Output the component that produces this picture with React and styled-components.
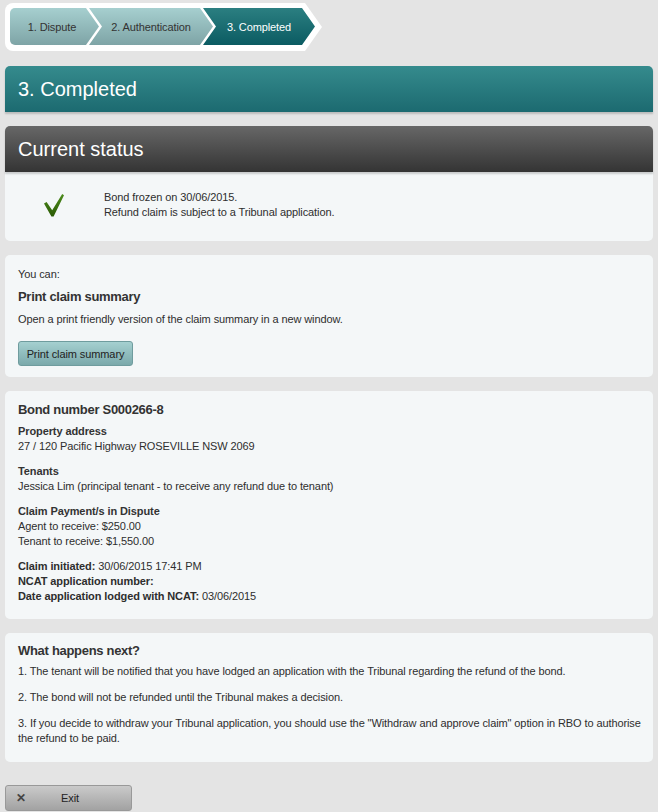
import styled, { createGlobalStyle } from "styled-components";

const GlobalStyle = createGlobalStyle`
  html, body {
    margin: 0;
    padding: 0;
    background: #e4e4e4;
  }
  body {
    font-family: "Liberation Sans", Arial, sans-serif;
    font-size: 11px;
    letter-spacing: -0.1px;
    color: #2e2e2e;
  }
`;

const Page = styled.div`
  padding: 3px 5px 2px;
  display: flex;
  flex-direction: column;
`;

const Steps = styled.div`
  align-self: flex-start;
  display: flex;
  background: #fff;
  padding: 5px 7px 6px 5px;
  border-radius: 8px;
  clip-path: polygon(0 0, calc(100% - 17px) 0, 100% 50%, calc(100% - 17px) 100%, 0 100%);
  margin-bottom: 15px;
`;

const Step = styled.div`
  height: 37px;
  width: ${(p) => p.$width}px;
  display: flex;
  align-items: center;
  box-sizing: border-box;
  padding-left: ${(p) => (p.$first ? 8 : 13)}px;
  padding-right: 13px;
  justify-content: center;
  font-size: 11px;
  color: ${(p) => (p.$active ? "#fff" : "#333")};
  background: ${(p) =>
    p.$active
      ? "linear-gradient(#2b7f81, #0b5b62)"
      : "linear-gradient(#a6cfcf, #7ea4a6)"};
  margin-left: ${(p) => (p.$first ? 0 : -10)}px;
  border-radius: ${(p) => (p.$first ? "5px 0 0 5px" : "0")};
  clip-path: ${(p) =>
    p.$first
      ? "polygon(0 0, calc(100% - 13px) 0, 100% 50%, calc(100% - 13px) 100%, 0 100%)"
      : "polygon(0 0, calc(100% - 13px) 0, 100% 50%, calc(100% - 13px) 100%, 0 100%, 13px 50%)"};
`;

const TitleBar = styled.div`
  height: 46px;
  display: flex;
  align-items: center;
  padding: 0 13px;
  font-size: 20px;
  letter-spacing: 0;
  color: #fff;
  border-radius: 5px 5px 0 0;
  background: ${(p) =>
    p.$dark ? "linear-gradient(#676767, #343434)" : "linear-gradient(#358b8d, #1c6a70)"};
  box-shadow: 0 2px 2px rgba(0, 0, 0, 0.18);
  margin-bottom: ${(p) => (p.$dark ? 0 : 14)}px;
  position: relative;
`;

const Panel = styled.div`
  background: #f4f7f8;
  border-radius: ${(p) => (p.$attached ? "0 0 5px 5px" : "5px")};
  padding: ${(p) => p.$pad || "10px 13px"};
  margin-bottom: 14px;
  line-height: 15px;
`;

const StatusRow = styled.div`
  display: flex;
  align-items: center;
`;

const CheckCell = styled.div`
  width: 86px;
  display: flex;
  padding-left: 26px;
  box-sizing: border-box;
`;

const Text = styled.p`
  margin: ${(p) => p.$m || "0"};
  line-height: 15px;
`;

const Heading = styled.h3`
  margin: ${(p) => p.$m || "0"};
  font-size: 13px;
  letter-spacing: -0.3px;
  line-height: 17px;
  font-weight: bold;
  color: #333;
`;

const Label = styled.div`
  font-weight: bold;
  color: #333;
`;

const Group = styled.div`
  margin-top: ${(p) => p.$mt ?? 10}px;
`;

const Button = styled.button`
  font-family: "Liberation Sans", Arial, sans-serif;
  font-size: 11px;
  letter-spacing: -0.1px;
  color: #222;
  height: 25px;
  width: 115px;
  padding: 0;
  border: 1px solid #6f9c9e;
  border-radius: 3px;
  background: linear-gradient(#a5d0d0, #7ba9ab);
  cursor: pointer;
`;

const ExitButton = styled.button`
  align-self: flex-start;
  margin-top: 9px;
  width: 127px;
  height: 26px;
  display: flex;
  align-items: center;
  padding: 0 0 0 10px;
  font-family: "Liberation Sans", Arial, sans-serif;
  font-size: 11px;
  letter-spacing: -0.1px;
  color: #222;
  border: 1px solid #999;
  border-radius: 3px;
  background: linear-gradient(#cacaca, #a2a2a2);
`;

const ExitX = styled.span`
  font-size: 12px;
  font-weight: bold;
  color: #444;
  width: 45px;
  text-align: left;
`;

const Check = () => (
  <svg width="20" height="23" viewBox="0 0 20 23">
    <defs>
      <linearGradient id="ck" x1="0" y1="0" x2="0" y2="1">
        <stop offset="0" stopColor="#4d8c1c" />
        <stop offset="1" stopColor="#2a5a05" />
      </linearGradient>
    </defs>
    <path d="M0 9.5 L2.6 8 L8.2 16.3 L18.2 0 L20 1.2 L9.6 22.6 L7.4 22.6 Z" fill="url(#ck)" />
  </svg>
);

export default function App() {
  return (
    <>
      <GlobalStyle />
      <Page>
        <Steps>
          <Step $first $width={89}>1. Dispute</Step>
          <Step $width={124}>2. Authentication</Step>
          <Step $active $width={112}>3. Completed</Step>
        </Steps>

        <TitleBar>3. Completed</TitleBar>

        <TitleBar $dark>Current status</TitleBar>
        <Panel $attached $pad="18px 13px 21px">
          <StatusRow>
            <CheckCell>
              <Check />
            </CheckCell>
            <div>
              <Text>Bond frozen on 30/06/2015.</Text>
              <Text>Refund claim is subject to a Tribunal application.</Text>
            </div>
          </StatusRow>
        </Panel>

        <Panel $pad="12px 13px 11px">
          <Text>You can:</Text>
          <Heading $m="6px 0 7px">Print claim summary</Heading>
          <Text $m="0 0 14px">Open a print friendly version of the claim summary in a new window.</Text>
          <Button>Print claim summary</Button>
        </Panel>

        <Panel $pad="10px 13px 15px">
          <Heading>Bond number S000266-8</Heading>
          <Group $mt={6}>
            <Label>Property address</Label>
            <div>27 / 120 Pacific Highway ROSEVILLE NSW 2069</div>
          </Group>
          <Group>
            <Label>Tenants</Label>
            <div>Jessica Lim (principal tenant - to receive any refund due to tenant)</div>
          </Group>
          <Group>
            <Label>Claim Payment/s in Dispute</Label>
            <div>Agent to receive: $250.00</div>
            <div>Tenant to receive: $1,550.00</div>
          </Group>
          <Group>
            <div>
              <b>Claim initiated:</b> 30/06/2015 17:41 PM
            </div>
            <div>
              <b>NCAT application number:</b>
            </div>
            <div>
              <b>Date application lodged with NCAT:</b> 03/06/2015
            </div>
          </Group>
        </Panel>

        <Panel $pad="9px 6px 16px 13px">
          <Heading>What happens next?</Heading>
          <Text $m="5px 0 11px">
            1. The tenant will be notified that you have lodged an application with the Tribunal regarding the refund of the bond.
          </Text>
          <Text $m="0 0 11px">2. The bond will not be refunded until the Tribunal makes a decision.</Text>
          <Text>
            3. If you decide to withdraw your Tribunal application, you should use the "Withdraw and approve claim" option in RBO to authorise the refund to be paid.
          </Text>
        </Panel>

        <ExitButton>
          <ExitX>✕</ExitX>
          Exit
        </ExitButton>
      </Page>
    </>
  );
}
